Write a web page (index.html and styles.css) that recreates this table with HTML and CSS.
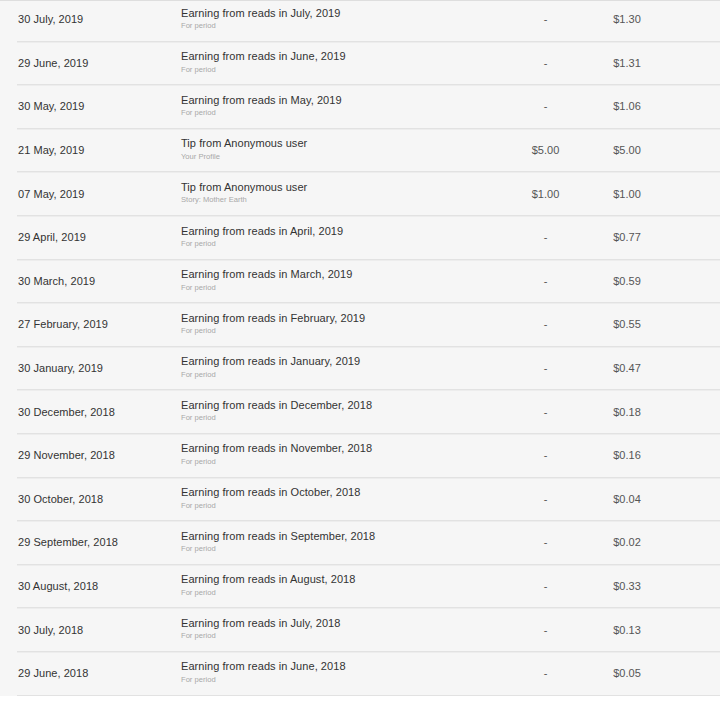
FILE: index.html
```html
<!DOCTYPE html>
<html>
<head>
<meta charset="utf-8">
<link rel="stylesheet" href="styles.css">
</head>
<body>
<div class="panel">
  <div class="topline"></div>
  <div class="list">
    <div class="row"><div class="date">30 July, 2019</div><div class="desc"><div class="title">Earning from reads in July, 2019</div><div class="sub">For period</div></div><div class="amt">-</div><div class="total">$1.30</div></div>
    <div class="row"><div class="date">29 June, 2019</div><div class="desc"><div class="title">Earning from reads in June, 2019</div><div class="sub">For period</div></div><div class="amt">-</div><div class="total">$1.31</div></div>
    <div class="row"><div class="date">30 May, 2019</div><div class="desc"><div class="title">Earning from reads in May, 2019</div><div class="sub">For period</div></div><div class="amt">-</div><div class="total">$1.06</div></div>
    <div class="row"><div class="date">21 May, 2019</div><div class="desc"><div class="title">Tip from Anonymous user</div><div class="sub">Your Profile</div></div><div class="amt">$5.00</div><div class="total">$5.00</div></div>
    <div class="row"><div class="date">07 May, 2019</div><div class="desc"><div class="title">Tip from Anonymous user</div><div class="sub">Story: Mother Earth</div></div><div class="amt">$1.00</div><div class="total">$1.00</div></div>
    <div class="row"><div class="date">29 April, 2019</div><div class="desc"><div class="title">Earning from reads in April, 2019</div><div class="sub">For period</div></div><div class="amt">-</div><div class="total">$0.77</div></div>
    <div class="row"><div class="date">30 March, 2019</div><div class="desc"><div class="title">Earning from reads in March, 2019</div><div class="sub">For period</div></div><div class="amt">-</div><div class="total">$0.59</div></div>
    <div class="row"><div class="date">27 February, 2019</div><div class="desc"><div class="title">Earning from reads in February, 2019</div><div class="sub">For period</div></div><div class="amt">-</div><div class="total">$0.55</div></div>
    <div class="row"><div class="date">30 January, 2019</div><div class="desc"><div class="title">Earning from reads in January, 2019</div><div class="sub">For period</div></div><div class="amt">-</div><div class="total">$0.47</div></div>
    <div class="row"><div class="date">30 December, 2018</div><div class="desc"><div class="title">Earning from reads in December, 2018</div><div class="sub">For period</div></div><div class="amt">-</div><div class="total">$0.18</div></div>
    <div class="row"><div class="date">29 November, 2018</div><div class="desc"><div class="title">Earning from reads in November, 2018</div><div class="sub">For period</div></div><div class="amt">-</div><div class="total">$0.16</div></div>
    <div class="row"><div class="date">30 October, 2018</div><div class="desc"><div class="title">Earning from reads in October, 2018</div><div class="sub">For period</div></div><div class="amt">-</div><div class="total">$0.04</div></div>
    <div class="row"><div class="date">29 September, 2018</div><div class="desc"><div class="title">Earning from reads in September, 2018</div><div class="sub">For period</div></div><div class="amt">-</div><div class="total">$0.02</div></div>
    <div class="row"><div class="date">30 August, 2018</div><div class="desc"><div class="title">Earning from reads in August, 2018</div><div class="sub">For period</div></div><div class="amt">-</div><div class="total">$0.33</div></div>
    <div class="row"><div class="date">30 July, 2018</div><div class="desc"><div class="title">Earning from reads in July, 2018</div><div class="sub">For period</div></div><div class="amt">-</div><div class="total">$0.13</div></div>
    <div class="row"><div class="date">29 June, 2018</div><div class="desc"><div class="title">Earning from reads in June, 2018</div><div class="sub">For period</div></div><div class="amt">-</div><div class="total">$0.05</div></div>
  </div>
</div>
</body>
</html>
```
FILE: styles.css
```css
html, body {
  margin: 0;
  padding: 0;
  background: #ffffff;
  font-family: "Liberation Sans", Arial, sans-serif;
}
.panel {
  background: #f6f6f6;
  overflow: hidden;
}
.topline {
  height: 1px;
  background: #dedede;
}
.list {
  margin-top: -3px;
  margin-left: 17px;
}
.row {
  display: grid;
  grid-template-columns: 164px 320px 89px 74px;
  align-items: center;
  height: 42.6px;
  border-bottom: 1px solid #e2e2e2;
  box-shadow: 0 1px 0 #ededed;
}
.date {
  padding-left: 1px;
  font-size: 11px;
  color: #333333;
  letter-spacing: 0.05px;
}
.desc {
  display: flex;
  flex-direction: column;
  margin-top: -1px;
}
.title {
  font-size: 11px;
  color: #333333;
  line-height: 13px;
  letter-spacing: 0.06px;
}
.sub {
  font-size: 7.6px;
  color: #a8a8a8;
  line-height: 10px;
  margin-top: 1.5px;
}
.amt {
  text-align: center;
  font-size: 11px;
  color: #555555;
}
.total {
  text-align: center;
  font-size: 11px;
  color: #555555;
}
```
